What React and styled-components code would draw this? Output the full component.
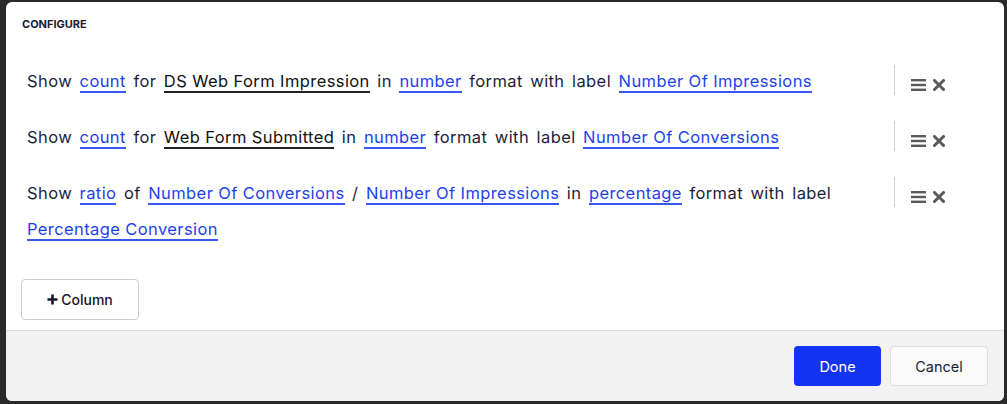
import styled, { createGlobalStyle } from 'styled-components'

const GlobalStyle = createGlobalStyle`
    html, body {
        margin: 0;
        padding: 0;
        background: #2a2a2a;
        font-family: Inter, "Noto Sans", sans-serif;
    }
`

const rows = [
    [
        { t: 'Show' }, { l: 'count' }, { t: 'for' }, { f: 'DS Web Form Impression' },
        { t: 'in' }, { l: 'number' }, { t: 'format with label' }, { l: 'Number Of Impressions' }
    ],
    [
        { t: 'Show' }, { l: 'count' }, { t: 'for' }, { f: 'Web Form Submitted' },
        { t: 'in' }, { l: 'number' }, { t: 'format with label' }, { l: 'Number Of Conversions' }
    ],
    [
        { t: 'Show' }, { l: 'ratio' }, { t: 'of' }, { l: 'Number Of Conversions' }, { t: '/' },
        { l: 'Number Of Impressions' }, { t: 'in' }, { l: 'percentage' },
        { t: 'format with label' }, { l: 'Percentage Conversion' }
    ]
]

const BarsIcon = () => (
    <svg width="15" height="12" viewBox="0 0 15 12">
        <rect x="0" y="0" width="15" height="2.4" fill="#5a5a5a" />
        <rect x="0" y="4.8" width="15" height="2.4" fill="#5a5a5a" />
        <rect x="0" y="9.6" width="15" height="2.4" fill="#5a5a5a" />
    </svg>
)

const TimesIcon = () => (
    <svg width="12" height="12" viewBox="0 0 12 12">
        <path d="M1.5 1.5 L10.5 10.5 M10.5 1.5 L1.5 10.5" stroke="#5a5a5a" strokeWidth="3" strokeLinecap="round" />
    </svg>
)

const PlusIcon = () => (
    <svg width="11" height="11" viewBox="0 0 11 11">
        <path d="M5.5 0.5 V10.5 M0.5 5.5 H10.5" stroke="#15152e" strokeWidth="2.6" />
    </svg>
)

const Sentence = ({ parts }) => (
    <Text>
        {parts.map((p, i) => (
            <span key={i}>
                {p.t && <span>{p.t}</span>}
                {p.l && <Link>{p.l}</Link>}
                {p.f && <Field>{p.f}</Field>}
                {i < parts.length - 1 ? ' ' : ''}
            </span>
        ))}
    </Text>
)

const App = () => {

    return (
        <>
            <GlobalStyle />
            <Backdrop>
                <Modal>
                    <Header>Configure</Header>

                    <Body>
                        {rows.map((parts, i) =>
                            <Row key={i}>
                                <Sentence parts={parts} />
                                <Actions>
                                    <IconButton><BarsIcon /></IconButton>
                                    <IconButton><TimesIcon /></IconButton>
                                </Actions>
                            </Row>
                        )}

                        <AddButton><PlusIcon />Column</AddButton>
                    </Body>

                    <Footer>
                        <PrimaryButton>Done</PrimaryButton>
                        <SecondaryButton>Cancel</SecondaryButton>
                    </Footer>
                </Modal>
            </Backdrop>
        </>
    )
}

export default App

const Backdrop = styled.div`
    width: 1007px;
    height: 404px;
    padding: 2px 3px 3px 6px;
    box-sizing: border-box;
`

const Modal = styled.div`
    background: white;
    border-radius: 6px;
    overflow: hidden;
    display: flex;
    flex-direction: column;
    height: 399px;
`

const Header = styled.div`
    padding: 14px 16px 0;
    font-size: 11px;
    line-height: 16px;
    font-weight: 700;
    text-transform: uppercase;
    color: #1b1b36;
`

const Body = styled.div`
    padding: 21px 0 10px 15px;
    flex: 1;
`

const Row = styled.div`
    display: flex;
    align-items: flex-start;
    padding: 10px 0 10px 6px;
`

const Text = styled.div`
    flex: 1;
    font-size: 16.5px;
    letter-spacing: 0.4px;
    line-height: 36px;
    word-spacing: 2.5px;
    color: #1d1d38;
`

const Link = styled.span`
    color: #1d3ff2;
    border-bottom: 2px solid #3a58f0;
    word-spacing: normal;
    cursor: pointer;
`

const Field = styled.span`
    color: #111;
    border-bottom: 2px solid #222;
    word-spacing: normal;
`

const Actions = styled.div`
    display: flex;
    align-items: flex-end;
    gap: 7px;
    height: 30px;
    box-sizing: border-box;
    margin: 2px 59px 0 14px;
    padding: 0 0 4px 16px;
    border-left: 1px solid #cfcfcf;
`

const IconButton = styled.span`
    display: flex;
    cursor: pointer;
`

const AddButton = styled.button`
    display: flex;
    align-items: center;
    justify-content: center;
    gap: 3px;
    width: 118px;
    height: 41px;
    margin-top: 22px;
    background: white;
    border: 1px solid #cccccc;
    border-radius: 4px;
    font-family: Inter, sans-serif;
    font-size: 14px;
    font-weight: 500;
    color: #15152e;
`

const Footer = styled.div`
    display: flex;
    justify-content: flex-end;
    gap: 9px;
    padding: 15px 16px 16px;
    background: #f2f2f2;
    border-top: 1px solid #dcdcdc;
`

const PrimaryButton = styled.button`
    width: 87px;
    height: 40px;
    border: none;
    border-radius: 4px;
    background: #1434f5;
    color: white;
    font-family: Inter, sans-serif;
    font-size: 14.5px;
`

const SecondaryButton = styled.button`
    width: 98px;
    height: 40px;
    border: 1px solid #dddddd;
    border-radius: 4px;
    background: #fafafa;
    color: #1b1b36;
    font-family: Inter, sans-serif;
    font-size: 14.5px;
`
